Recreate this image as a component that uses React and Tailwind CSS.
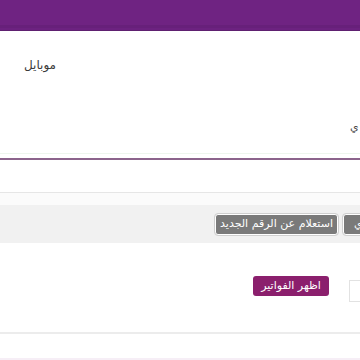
export default function App() {
  return (
    <div className="w-[360px] h-[360px] overflow-hidden bg-white relative" style={{ fontFamily: '"DejaVu Sans", sans-serif' }}>
      {/* header */}
      <div className="h-[25px] bg-[#6f2382]"></div>
      <div className="h-[3px] bg-[#67207a]"></div>
      <div className="h-[2px] bg-[#6c2280]"></div>
      <div className="h-[1px] bg-[#5e2070]"></div>

      {/* type label */}
      <div className="h-[122px] relative">
        <div className="absolute left-[24px] top-[25px] text-[12px] text-[#3a3a3a]" dir="rtl">موبايل</div>
        <div className="absolute left-[350px] top-[88px] text-[11px] text-[#444]" dir="rtl">ي</div>
      </div>
      <div className="h-[1px] bg-[#eef6ee]"></div>
      <div className="h-[4px]"></div>
      <div className="h-[2px] bg-[#8c648c]"></div>

      <div className="h-[32px]"></div>
      <div className="h-[1px] bg-[#e6e6e6]"></div>
      <div className="h-[12px] bg-[#fbfbfb]"></div>

      {/* actions band */}
      <div className="h-[38px] bg-[#f1f1f1] flex items-center justify-end" dir="ltr">
        <div className="flex gap-[5px] mr-[-19px]">
          <button className="h-[21px] w-[123px] bg-[#7a7a7a] text-white text-[11px] rounded-[3px] border border-white outline outline-[#cfcfcf]" dir="rtl">
            استعلام عن الرقم الجديد
          </button>
          <button className="h-[21px] w-[36px] bg-[#7a7a7a] text-white text-[11px] rounded-[3px] border border-white outline outline-[#cfcfcf] text-left pl-[10px]" dir="rtl">
            ي
          </button>
        </div>
      </div>

      {/* bills */}
      <div className="h-[89px] flex items-start justify-end pt-[30px]">
        <button className="h-[20px] w-[76px] bg-[#8b1f6d] text-white text-[11px] rounded-[3px] mt-[3px]" dir="rtl">
          اظهر الفواتير
        </button>
        <div className="w-[40px] h-[22px] border border-[#e2e2e2] bg-white ml-[20px] mr-[-29px] mt-[7px]"></div>
      </div>
      <div className="h-[2px] bg-[#ececec]"></div>
      <div className="h-[24px]"></div>
      <div className="h-[2px] bg-[#f6eef6]"></div>
      <div className="h-[2px] bg-[#7d5b8c]"></div>
    </div>
  );
}
